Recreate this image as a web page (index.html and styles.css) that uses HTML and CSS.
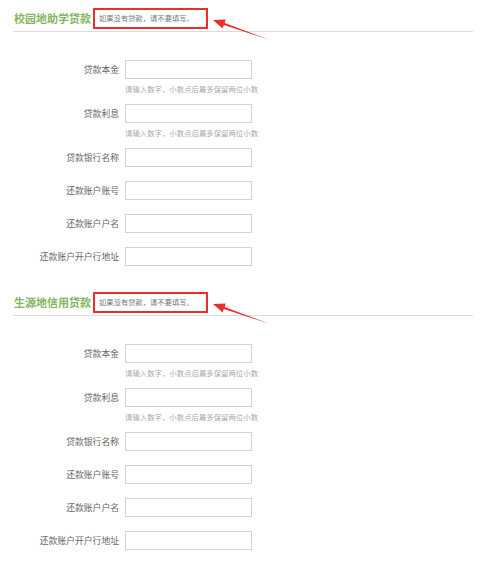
FILE: index.html
```html
<!DOCTYPE html>
<html lang="zh-CN">

<head>
    <meta charset="UTF-8">
    <meta name="viewport" content="width=device-width, initial-scale=1.0">
    <title>贷款信息</title>
    <link rel="stylesheet" href="styles.css">
</head>

<body>

    <div class="section">
        <div class="section-head">
            <h3>校园地助学贷款</h3>
            <span class="notice">如果没有贷款，请不要填写。</span>
            <svg class="arrow" width="66" height="30" viewBox="0 0 66 30">
                <polygon points="5,6 17.8,5.4 16.7,8.9 62,26 15.9,11.1 14.6,14.6" fill="#e8312f" />
            </svg>
        </div>
        <div class="form">
            <div class="row">
                <label>贷款本金</label>
                <div class="field">
                    <input type="text">
                    <p class="hint">请输入数字，小数点后最多保留两位小数</p>
                </div>
            </div>
            <div class="row">
                <label>贷款利息</label>
                <div class="field">
                    <input type="text">
                    <p class="hint">请输入数字，小数点后最多保留两位小数</p>
                </div>
            </div>
            <div class="row">
                <label>贷款银行名称</label>
                <div class="field"><input type="text"></div>
            </div>
            <div class="row">
                <label>还款账户账号</label>
                <div class="field"><input type="text"></div>
            </div>
            <div class="row">
                <label>还款账户户名</label>
                <div class="field"><input type="text"></div>
            </div>
            <div class="row">
                <label>还款账户开户行地址</label>
                <div class="field"><input type="text"></div>
            </div>
        </div>
    </div>

    <div class="section">
        <div class="section-head">
            <h3>生源地信用贷款</h3>
            <span class="notice">如果没有贷款，请不要填写。</span>
            <svg class="arrow" width="66" height="30" viewBox="0 0 66 30">
                <polygon points="5,6 17.8,5.4 16.7,8.9 62,26 15.9,11.1 14.6,14.6" fill="#e8312f" />
            </svg>
        </div>
        <div class="form">
            <div class="row">
                <label>贷款本金</label>
                <div class="field">
                    <input type="text">
                    <p class="hint">请输入数字，小数点后最多保留两位小数</p>
                </div>
            </div>
            <div class="row">
                <label>贷款利息</label>
                <div class="field">
                    <input type="text">
                    <p class="hint">请输入数字，小数点后最多保留两位小数</p>
                </div>
            </div>
            <div class="row">
                <label>贷款银行名称</label>
                <div class="field"><input type="text"></div>
            </div>
            <div class="row">
                <label>还款账户账号</label>
                <div class="field"><input type="text"></div>
            </div>
            <div class="row">
                <label>还款账户户名</label>
                <div class="field"><input type="text"></div>
            </div>
            <div class="row">
                <label>还款账户开户行地址</label>
                <div class="field"><input type="text"></div>
            </div>
        </div>
    </div>

</body>

</html>
```

FILE: styles.css
```css
body {
    font-family: "Noto Sans CJK SC", "Noto Sans", sans-serif;
    background-color: #ffffff;
    color: #555;
    margin: 0;
}

.section {
    padding: 0 7px 0 13px;
}

.section-head {
    position: relative;
    display: flex;
    align-items: center;
    gap: 2px;
    padding: 8px 0 2px 1px;
    border-bottom: 1px solid #dcdcdc;
}

.section-head h3 {
    margin: 0;
    font-size: 11px;
    font-weight: bold;
    color: #84b563;
    line-height: 21px;
}

.notice {
    box-sizing: border-box;
    height: 21px;
    width: 115px;
    padding-left: 4px;
    border: 2px solid #e8312f;
    font-size: 7.3px;
    line-height: 17px;
    color: #777;
}

.arrow {
    position: absolute;
    left: 195px;
    top: 14px;
}

.form {
    padding: 28px 0 18px;
}

.row {
    display: flex;
    align-items: flex-start;
    margin-bottom: 14px;
}

.row:last-child {
    margin-bottom: 0;
}

.row label {
    width: 106px;
    text-align: right;
    font-size: 8.8px;
    line-height: 19px;
    color: #666;
    margin-right: 6px;
}

.field input {
    display: block;
    box-sizing: border-box;
    width: 127px;
    height: 19px;
    margin: 0;
    border: 1px solid #d4d4d4;
    border-radius: 0;
    padding: 0 4px;
}

.hint {
    margin: 4px 0 -5px;
    font-size: 7.4px;
    line-height: 12px;
    color: #aaa;
}
```
